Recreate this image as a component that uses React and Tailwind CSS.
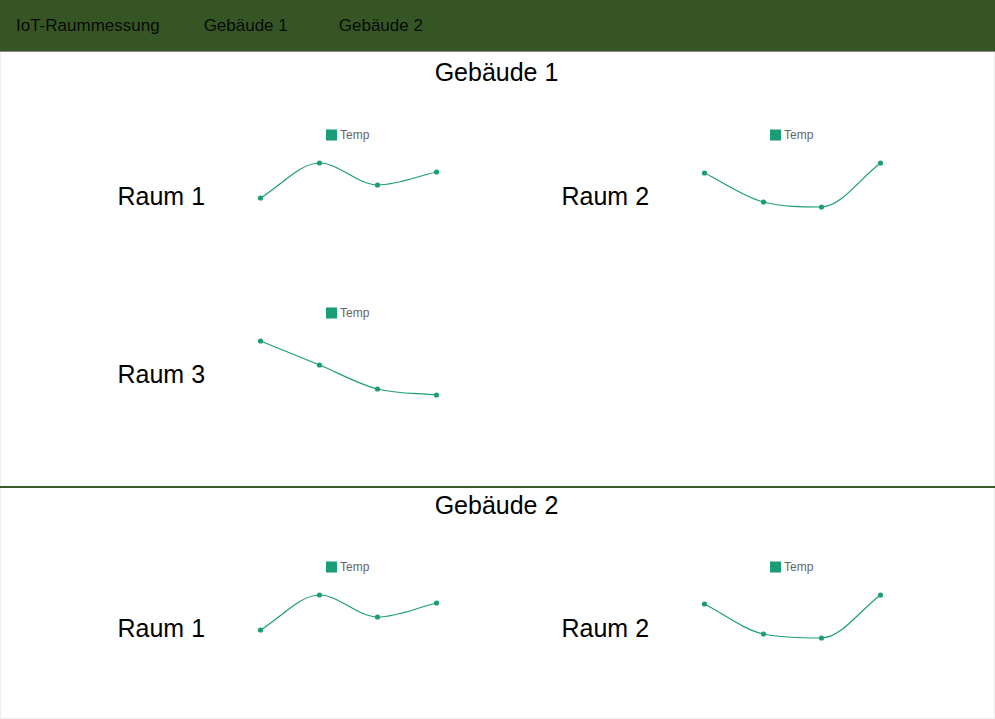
import React from "react";

const COLOR = "#1b9e77";
const XS = [9.5, 68.5, 126.5, 185.5];

function monotonePath(pts) {
  const n = pts.length;
  const dK = [];
  for (let i = 0; i < n - 1; i++) {
    dK.push((pts[i + 1][1] - pts[i][1]) / (pts[i + 1][0] - pts[i][0]));
  }
  const mK = pts.map((_, i) => {
    if (i === 0) return dK[0];
    if (i === n - 1) return dK[n - 2];
    if (Math.sign(dK[i - 1]) !== Math.sign(dK[i])) return 0;
    return (dK[i - 1] + dK[i]) / 2;
  });
  for (let i = 0; i < n - 1; i++) {
    if (dK[i] === 0) {
      mK[i] = 0;
      mK[i + 1] = 0;
      continue;
    }
    const a = mK[i] / dK[i];
    const b = mK[i + 1] / dK[i];
    const sq = a * a + b * b;
    if (sq > 9) {
      const tau = 3 / Math.sqrt(sq);
      mK[i] = a * tau * dK[i];
      mK[i + 1] = b * tau * dK[i];
    }
  }
  let d = `M${pts[0][0]},${pts[0][1]}`;
  for (let i = 0; i < n - 1; i++) {
    const dx = (pts[i + 1][0] - pts[i][0]) / 3;
    const c1 = [pts[i][0] + dx, pts[i][1] + mK[i] * dx];
    const c2 = [pts[i + 1][0] - dx, pts[i + 1][1] - mK[i + 1] * dx];
    d += ` C${c1[0]},${c1[1]} ${c2[0]},${c2[1]} ${pts[i + 1][0]},${pts[i + 1][1]}`;
  }
  return d;
}

function Chart({ offs }) {
  const pts = offs.map((o, i) => [XS[i], 9 + o]);
  return (
    <svg width="200" height="140" viewBox="0 0 200 140" className="block shrink-0">
      <rect x="75" y="3.5" width="11" height="11" fill={COLOR} />
      <text
        x="89"
        y="13"
        fontSize="12"
        fill="#666"
        style={{ fontFamily: '"Liberation Sans", Arial, sans-serif' }}
      >
        Temp
      </text>
      <path d={monotonePath(pts)} fill="none" stroke={COLOR} strokeWidth="1.2" />
      {pts.map((p, i) => (
        <circle key={i} cx={p[0]} cy={p[1]} r="2.6" fill={COLOR} />
      ))}
    </svg>
  );
}

function Room({ name, offs }) {
  return (
    <div className="flex items-center h-[178px]">
      <div className="w-[197px] pl-[64px] text-[25px] leading-[29px] text-black">{name}</div>
      <Chart offs={offs} />
    </div>
  );
}

export default function App() {
  return (
    <div
      className="w-[995px] h-[719px] overflow-hidden bg-white"
      style={{ fontFamily: '"Liberation Sans", Arial, sans-serif' }}
    >
      <nav className="h-[52px] bg-[#355624] border-b border-[#8a8a8a] flex items-center text-[17px] text-[#0a0a0a]">
        <span className="ml-[16px]">IoT-Raummessung</span>
        <span className="ml-[44px]">Gebäude 1</span>
        <span className="ml-[51px]">Gebäude 2</span>
      </nav>

      <section className="border-x border-[#eeeeee] pt-[6px] pb-[23px]">
        <h2 className="text-center text-[25px] leading-[29px] text-black pr-[2px]">Gebäude 1</h2>
        <div className="w-[888px] mx-auto grid grid-cols-2 mt-[20px]">
          <Room name="Raum 1" offs={[63, 28, 50, 37]} />
          <Room name="Raum 2" offs={[38, 67, 72, 28]} />
          <Room name="Raum 3" offs={[28, 52, 76, 82]} />
        </div>
      </section>

      <div className="h-[2px] bg-[#3a5a27]" />

      <section className="border-x border-b border-[#eeeeee] pt-[3px] h-[231px]">
        <h2 className="text-center text-[25px] leading-[29px] text-black pr-[2px]">Gebäude 2</h2>
        <div className="w-[888px] mx-auto grid grid-cols-2 mt-[19px]">
          <Room name="Raum 1" offs={[63, 28, 50, 36]} />
          <Room name="Raum 2" offs={[37, 67, 71, 28]} />
        </div>
      </section>
    </div>
  );
}
